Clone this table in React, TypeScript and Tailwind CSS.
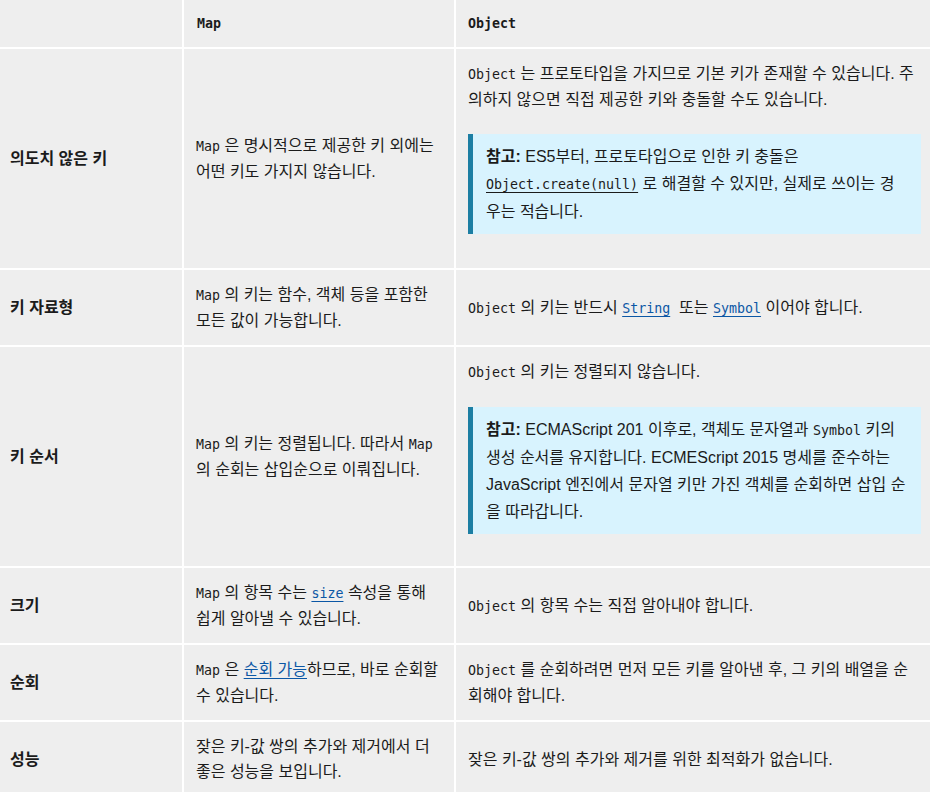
import type { ReactNode } from 'react';

const sans = "font-['Liberation_Sans','Noto_Sans_CJK_KR',sans-serif]";

function Code({ children, className = '' }: { children: ReactNode; className?: string }) {
  return (
    <code className={`font-['DejaVu_Sans_Mono','Noto_Sans_CJK_KR',monospace] text-[13.3px] ${className}`}>
      {children}
    </code>
  );
}

function Link({ children, code }: { children: ReactNode; code?: boolean }) {
  if (code) {
    return (
      <a className="text-[#0b57a5] underline underline-offset-[3px]">
        <Code>{children}</Code>
      </a>
    );
  }
  return <a className="text-[#0b57a5] underline underline-offset-[3px]">{children}</a>;
}

function Note({ children }: { children: ReactNode }) {
  return (
    <div className="mt-[22px] mb-[21px] border-l-[5px] border-[#1c7ea3] bg-[#d8f3fe] py-[9px] pl-[13px] pr-[14px] leading-[27px]">
      <strong className="font-bold">참고:</strong> {children}
    </div>
  );
}

function Label({ children }: { children: ReactNode }) {
  return (
    <div className="flex items-center bg-[#eeeeee] pl-[10px] pr-2 font-bold">{children}</div>
  );
}

function Cell({ children }: { children: ReactNode }) {
  return <div className="flex flex-col justify-center bg-[#eeeeee] px-3 py-3">{children}</div>;
}

export default function App() {
  return (
    <div className={`w-[930px] h-[792px] overflow-hidden bg-[#eeeeee] text-[16px] leading-[25px] text-[#1b1b1b] ${sans}`}>
      <div className="grid grid-cols-[182px_270px_474px] gap-[2px] bg-white">
        <div className="h-[47px] bg-[#eeeeee]" />
        <div className="flex h-[47px] items-center bg-[#eeeeee] px-[13px]">
          <Code className="font-bold">Map</Code>
        </div>
        <div className="flex h-[47px] items-center bg-[#eeeeee] px-3">
          <Code className="font-bold">Object</Code>
        </div>

        <Label>의도치 않은 키</Label>
        <Cell>
          <p>
            <Code>Map</Code> 은 명시적으로 제공한 키 외에는 어떤 키도 가지지 않습니다.
          </p>
        </Cell>
        <div className="bg-[#eeeeee] pl-3 pr-[9px] pt-3 pb-[13px]">
          <p>
            <Code>Object</Code> 는 프로토타입을 가지므로 기본 키가 존재할 수 있습니다. 주의하지 않으면 직접 제공한 키와 충돌할 수도 있습니다.
          </p>
          <Note>
            ES5부터, 프로토타입으로 인한 키 충돌은{' '}
            <a className="underline underline-offset-[3px]">
              <Code>Object.create(null)</Code>
            </a>{' '}
            로 해결할 수 있지만, 실제로 쓰이는 경우는 적습니다.
          </Note>
        </div>

        <Label>키 자료형</Label>
        <Cell>
          <p>
            <Code>Map</Code> 의 키는 함수, 객체 등을 포함한 모든 값이 가능합니다.
          </p>
        </Cell>
        <Cell>
          <p>
            <Code>Object</Code> 의 키는 반드시 <Link code>String</Link>&nbsp; 또는 <Link code>Symbol</Link> 이어야 합니다.
          </p>
        </Cell>

        <Label>키 순서</Label>
        <Cell>
          <p>
            <Code>Map</Code> 의 키는 정렬됩니다. 따라서 <Code>Map</Code> 의 순회는 삽입순으로 이뤄집니다.
          </p>
        </Cell>
        <div className="bg-[#eeeeee] pl-3 pr-[9px] pt-3 pb-[11px]">
          <p>
            <Code>Object</Code> 의 키는 정렬되지 않습니다.
          </p>
          <Note>
            ECMAScript 201 이후로, 객체도 문자열과 <Code>Symbol</Code> 키의 생성 순서를 유지합니다. ECMEScript 2015 명세를 준수하는 JavaScript 엔진에서 문자열 키만 가진 객체를 순회하면 삽입 순을 따라갑니다.
          </Note>
        </div>

        <Label>크기</Label>
        <Cell>
          <p>
            <Code>Map</Code> 의 항목 수는 <Link code>size</Link> 속성을 통해 쉽게 알아낼 수 있습니다.
          </p>
        </Cell>
        <Cell>
          <p>
            <Code>Object</Code> 의 항목 수는 직접 알아내야 합니다.
          </p>
        </Cell>

        <Label>순회</Label>
        <Cell>
          <p>
            <Code>Map</Code> 은 <Link>순회 가능</Link>하므로, 바로 순회할 수 있습니다.
          </p>
        </Cell>
        <Cell>
          <p>
            <Code>Object</Code> 를 순회하려면 먼저 모든 키를 알아낸 후, 그 키의 배열을 순회해야 합니다.
          </p>
        </Cell>

        <Label>성능</Label>
        <Cell>
          <p>잦은 키-값 쌍의 추가와 제거에서 더 좋은 성능을 보입니다.</p>
        </Cell>
        <Cell>
          <p>잦은 키-값 쌍의 추가와 제거를 위한 최적화가 없습니다.</p>
        </Cell>
      </div>
    </div>
  );
}
